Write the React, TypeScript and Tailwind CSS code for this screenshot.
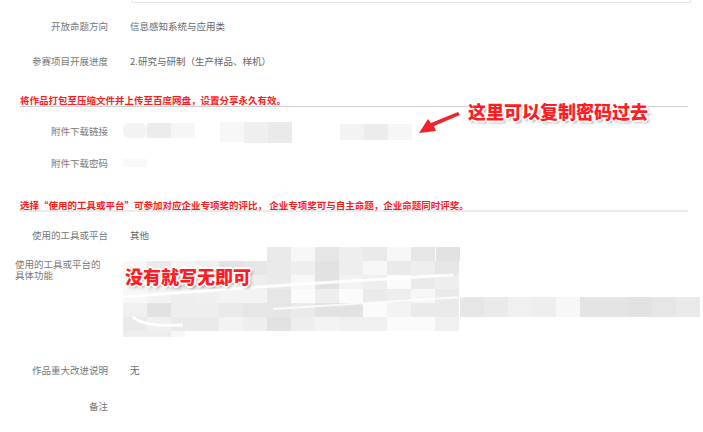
import React from 'react';

const font = { fontFamily: '"Noto Sans CJK SC", "Noto Sans", sans-serif' };

function Row({ label, children, h }: { label: string; children?: React.ReactNode; h: string }) {
  return (
    <div className={`flex items-center ${h}`}>
      <div className="w-[108px] shrink-0 text-right text-[9.5px] text-[#777]">{label}</div>
      <div className="ml-[22px] text-[9.5px] text-[#666]">{children}</div>
    </div>
  );
}

function Notice({ text, line }: { text: string; line: string }) {
  return (
    <div className={`ml-[20px] mr-[15px] h-[13px] text-[9.5px] leading-[12px] font-bold text-[#ff1a1a] ${line}`}>
      {text}
    </div>
  );
}

const shades = ['#e6e6e6', '#eeeeee', '#f3f3f3', '#eaeaea', '#f7f7f7', '#e2e2e2', '#f0f0f0', '#fbfbfb'];

function Mosaic() {
  const cells: React.ReactNode[] = [];
  let s = 7;
  const rnd = () => {
    s = (s * 9301 + 49297) % 233280;
    return s / 233280;
  };
  for (let r = 0; r < 6; r++) {
    for (let c = 0; c < 14; c++) {
      if (r === 0 && c < 6) continue;
      const fill = shades[Math.floor(rnd() * shades.length)];
      cells.push(<rect key={`${r}-${c}`} x={c * 24} y={r * 14} width={24} height={14} fill={fill} />);
    }
  }
  const right: React.ReactNode[] = [];
  for (let c = 0; c < 10; c++) {
    const fill = c === 5 || c === 6 ? '#e4e4e4' : shades[(c * 3) % shades.length];
    right.push(<rect key={`rr${c}`} x={337 + c * 24} y={50} width={24} height={20} fill={fill} />);
  }
  return (
    <svg width="580" height="92" className="block">
      {cells}
      {right}
      <rect x={313} y={0} width={24} height={14} fill="#e2e2e2" />
      <path d="M0 50 Q120 40 330 28" stroke="#fff" strokeWidth="3" fill="none" opacity="0.9" />
      <path d="M10 70 Q20 80 60 78" stroke="#fff" strokeWidth="3" fill="none" />
      <path d="M150 62 Q260 55 340 50" stroke="#fff" strokeWidth="2" fill="none" opacity="0.8" />
      <rect x={0} y={84} width={48} height={6} fill="#eeeeee" />
      <rect x={48} y={84} width={14} height={6} fill="#f7f7f7" />
    </svg>
  );
}

function LinkBlur() {
  return (
    <svg width="300" height="24" className="block">
      <rect x={0} y={4} width={24} height={15} rx={6} fill="#f3f3f3" />
      <rect x={24} y={4} width={24} height={15} fill="#ececec" />
      <rect x={48} y={4} width={24} height={15} fill="#f6f6f6" />
      <rect x={97} y={3} width={24} height={20} fill="#f7f7f7" />
      <rect x={121} y={3} width={24} height={22} fill="#efefef" />
      <rect x={145} y={3} width={24} height={22} fill="#eaeaea" />
      <rect x={217} y={5} width={24} height={16} fill="#f3f3f3" />
      <rect x={241} y={5} width={24} height={16} fill="#ececec" />
      <rect x={265} y={5} width={24} height={16} fill="#f6f6f6" />
    </svg>
  );
}

const outline =
  '[text-shadow:1px_1px_0_#fff,-1px_-1px_0_#fff,1px_-1px_0_#fff,-1px_1px_0_#fff,0_2px_0_#fff,2px_0_0_#fff,0_-2px_0_#fff,-2px_0_0_#fff,2px_2px_3px_#888]';

export default function App() {
  return (
    <div className="relative w-[703px] h-[432px] overflow-hidden bg-white" style={font}>
      <div className="ml-[131px] mr-[12px] h-[3px] border-x border-b border-[#e6e6e6] rounded-b-[2px]" />

      <div className="mt-[6px]">
        <Row label="开放命题方向" h="h-[35px]">信息感知系统与应用类</Row>
        <Row label="参赛项目开展进度" h="h-[35px]">2.研究与研制（生产样品、样机）</Row>
      </div>

      <div className="pt-[15px]">
        <Notice text="将作品打包至压缩文件并上传至百度网盘，设置分享永久有效。" line="border-b border-[#cfcfcf]" />
      </div>

      <div className="mt-[8px]">
        <Row label="附件下载链接" h="h-[32px]">
          <div className="-ml-[7px]">
            <LinkBlur />
          </div>
        </Row>
        <Row label="附件下载密码" h="h-[32px]">
          <div className="-ml-[7px] w-[24px] h-[8px] bg-[#f8f8f8]" />
        </Row>
      </div>

      <div className="pt-[20px]">
        <Notice
          text="选择“使用的工具或平台”可参加对应企业专项奖的评比， 企业专项奖可与自主命题，企业命题同时评奖。"
          line="border-b-2 border-[#ebebeb]"
        />
      </div>

      <div className="mt-[7px]">
        <Row label="使用的工具或平台" h="h-[32px]">其他</Row>
      </div>

      <div className="flex h-[100px]">
        <div className="ml-[15px] w-[93px] shrink-0 pt-[8px] text-[9.5px] leading-[11px] text-[#777]">
          使用的工具或平台的具体功能
        </div>
        <div className="ml-[15px] -mt-[4px]">
          <Mosaic />
        </div>
      </div>

      <Row label="作品重大改进说明" h="h-[38px]">无</Row>
      <Row label="备注" h="h-[34px]" />

      <div
        className={`absolute left-[468px] top-[99px] text-[18px] leading-[24px] font-black text-[#ff1c24] ${outline}`}
      >
        这里可以复制密码过去
      </div>
      <svg className="absolute left-[414px] top-[108px]" width="50" height="30" viewBox="0 0 50 30">
        <polygon points="44,4 46,7 20,18 22,23 5,25 14,11 17,15" fill="#f0222a" />
      </svg>

      <div
        className={`absolute left-[125px] top-[264px] text-[18px] leading-[24px] font-black text-[#ff1c24] ${outline}`}
      >
        没有就写无即可
      </div>
    </div>
  );
}
